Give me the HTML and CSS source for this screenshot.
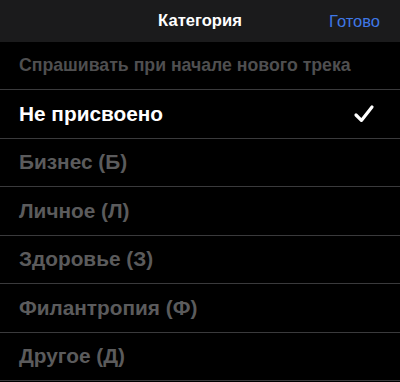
FILE: index.html
```html
<!DOCTYPE html>
<html lang="ru">
<head>
<meta charset="utf-8">
<link rel="stylesheet" href="styles.css">
</head>
<body>
<div class="screen">
  <header class="navbar">
    <span class="nav-side"></span>
    <span class="nav-title">Категория</span>
    <span class="nav-done">Готово</span>
  </header>
  <ul class="list">
    <li class="row row-hint">Спрашивать при начале нового трека</li>
    <li class="row row-selected"><span>Не присвоено</span>
      <svg class="check" width="22" height="20" viewBox="0 0 22 20"><path d="M3 11 L8.4 16.4 L19 3" fill="none" stroke="#fff" stroke-width="3.2" stroke-linecap="round" stroke-linejoin="round"/></svg>
    </li>
    <li class="row">Бизнес (Б)</li>
    <li class="row">Личное (Л)</li>
    <li class="row">Здоровье (З)</li>
    <li class="row">Филантропия (Ф)</li>
    <li class="row">Другое (Д)</li>
  </ul>
</div>
</body>
</html>
```
FILE: styles.css
```css
html, body {
  margin: 0;
  padding: 0;
  background: #000;
}
.screen {
  width: 400px;
  height: 382px;
  overflow: hidden;
  background: #000;
  font-family: "Liberation Sans", Arial, sans-serif;
}
.navbar {
  height: 42px;
  background: #1b1b1c;
  display: grid;
  grid-template-columns: 1fr auto 1fr;
  align-items: center;
  padding: 0 20px;
  box-sizing: border-box;
}
.nav-title {
  color: #fff;
  font-weight: bold;
  font-size: 16.6px;
}
.nav-done {
  justify-self: end;
  color: #3f78e6;
  font-size: 16.5px;
}
.list {
  list-style: none;
  margin: 0;
  padding: 0;
}
.row {
  height: 47.5px;
  border-bottom: 1px solid #3a3a3c;
  display: flex;
  align-items: center;
  justify-content: space-between;
  padding: 0 25px 0 19px;
  color: #5b5b5c;
  font-weight: bold;
  font-size: 20.8px;
}
.row-hint {
  height: 47px;
  font-size: 17.7px;
  color: #4f4f50;
}
.row-selected {
  color: #fff;
}
.check {
  display: block;
}
```
